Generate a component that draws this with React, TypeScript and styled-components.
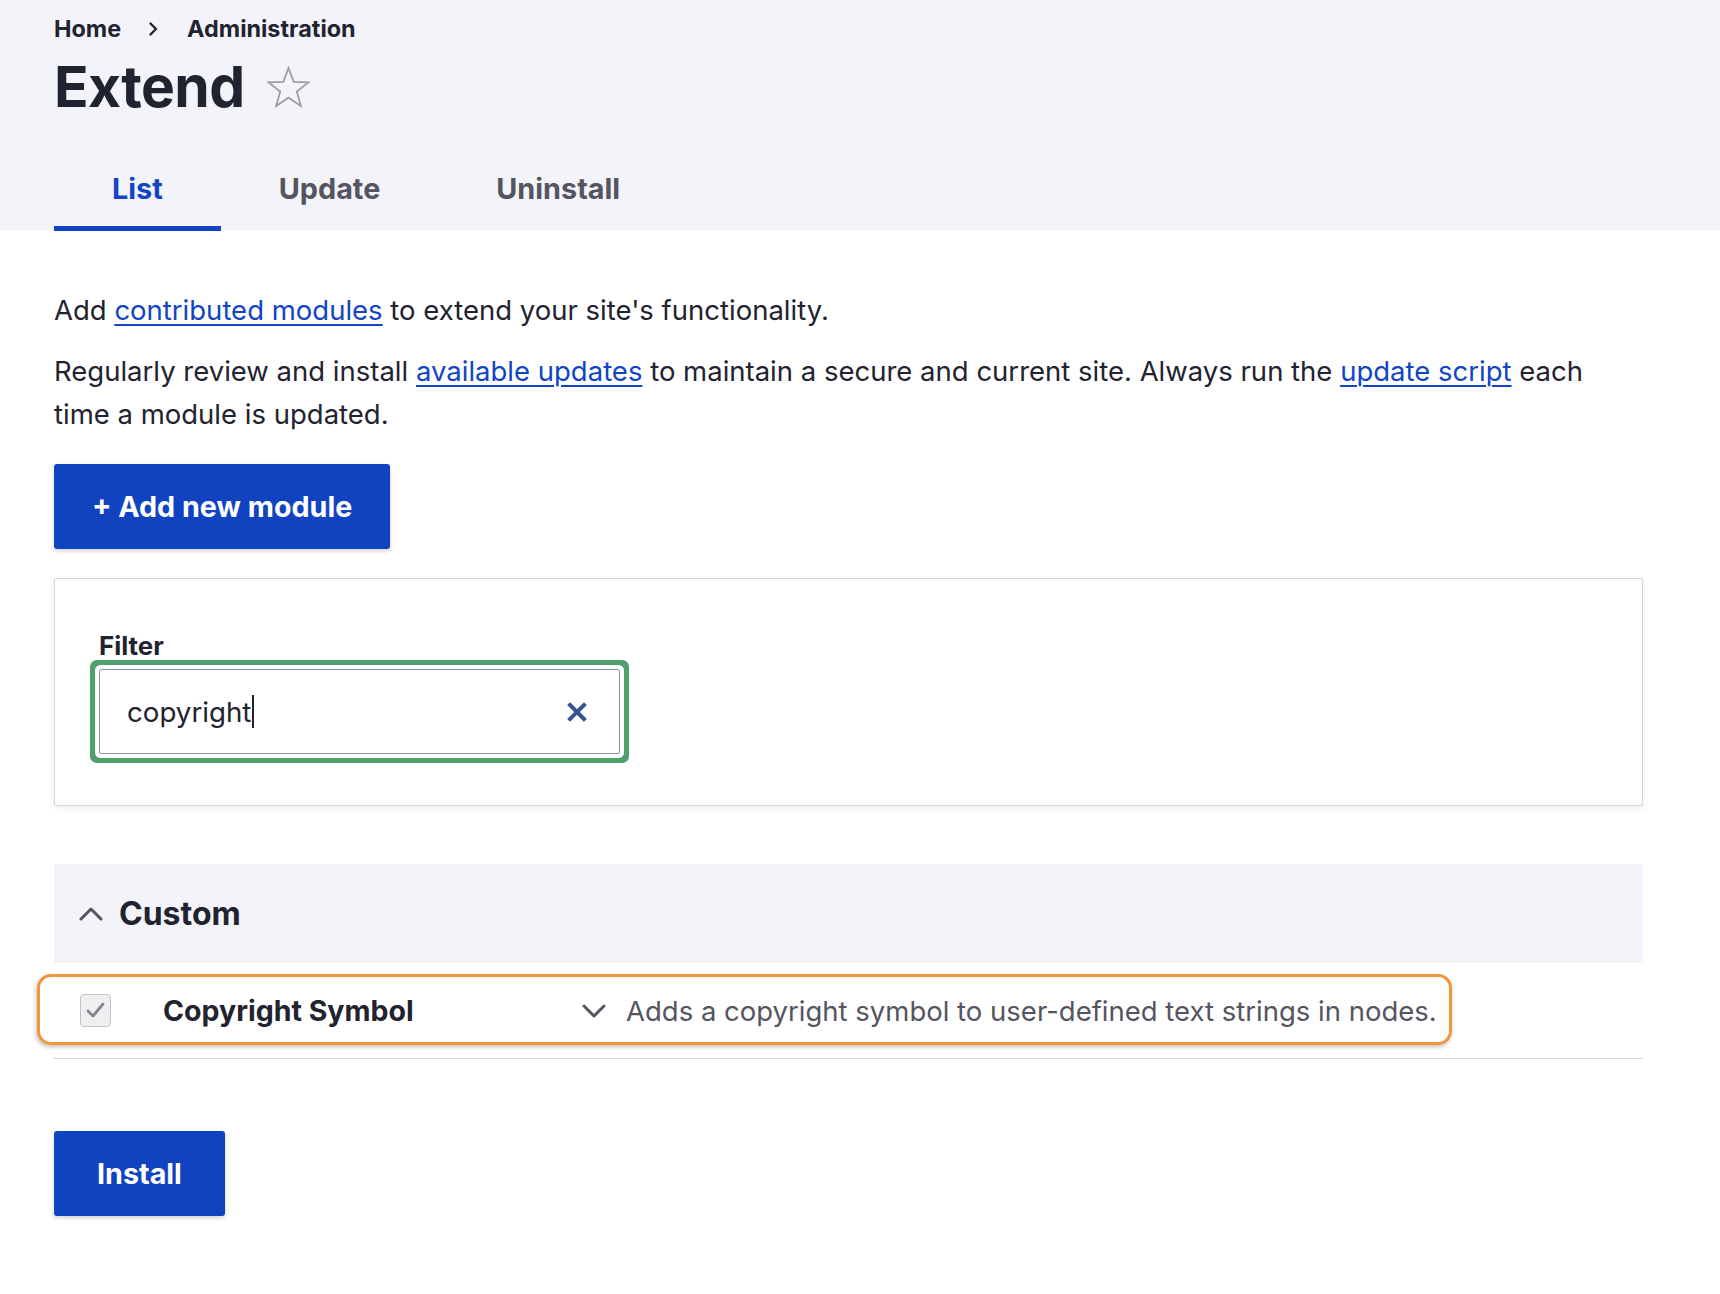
import React from "react";
import styled, { createGlobalStyle } from "styled-components";

const GlobalStyle = createGlobalStyle`
  html, body { margin: 0; padding: 0; background: #ffffff; }
  body { font-family: Inter, "Noto Sans", Arial, sans-serif; color: #222330; -webkit-font-smoothing: antialiased; }
  * { box-sizing: border-box; }
`;

const Page = styled.div`
  width: 1720px;
  min-height: 1294px;
  background: #fff;
`;

const Header = styled.header`
  background: #f3f4f9;
  padding: 15px 77px 0 54px;
  height: 230px;
`;

const Breadcrumb = styled.nav`
  display: flex;
  align-items: center;
  height: 27px;
  font-size: 23.4px;
  font-weight: 700;
  line-height: 27px;
  color: #222330;
`;

const Crumb = styled.span`
  color: #222330;
`;

const CrumbSep = styled.span`
  display: inline-flex;
  margin: 0 29px 0 28px;
  color: #222330;
`;

const TitleRow = styled.div`
  display: flex;
  align-items: center;
  gap: 22px;
  margin-top: 10px;
  height: 70px;
`;

const Title = styled.h1`
  margin: 0;
  font-size: 57px;
  line-height: 70px;
  font-weight: 700;
  letter-spacing: -0.6px;
  color: #222330;
`;

const Tabs = styled.nav`
  display: flex;
  margin-top: 30px;
`;

const Tab = styled.a<{ $active?: boolean }>`
  display: block;
  padding: 19px 58px;
  font-size: 28.8px;
  line-height: 36px;
  font-weight: 700;
  text-decoration: none;
  color: ${(p) => (p.$active ? "#1145c6" : "#545560")};
  border-bottom: 5px solid ${(p) => (p.$active ? "#1145c6" : "transparent")};
`;

const Main = styled.main`
  padding: 59px 77px 60px 54px;
`;

const Para = styled.p<{ $gap?: number }>`
  margin: ${(p) => p.$gap ?? 0}px 0 0;
  max-width: 1550px;
  font-size: 27.5px;
  line-height: 43px;
  color: #222330;
`;

const Link = styled.a`
  color: #1145c6;
  text-decoration: underline;
  text-underline-offset: 4px;
  text-decoration-thickness: 2px;
`;

const PrimaryButton = styled.button<{ $top: number; $padX: number }>`
  display: inline-flex;
  align-items: center;
  margin-top: ${(p) => p.$top}px;
  height: 85px;
  padding: 0 ${(p) => p.$padX}px;
  border: 0;
  border-radius: 3px;
  background: #1143c1;
  color: #fff;
  font-family: Inter, "Noto Sans", Arial, sans-serif;
  font-size: 28.7px;
  font-weight: 700;
  box-shadow: 0 2px 4px rgba(0, 0, 0, 0.18);
  cursor: pointer;
`;

const FilterCard = styled.div`
  margin-top: 29px;
  border: 1px solid #d6d7dc;
  border-radius: 2px;
  background: #fff;
  padding: 52px 44px 51px;
  box-shadow: 0 2px 6px rgba(0, 0, 0, 0.08);
`;

const FilterLabel = styled.label`
  display: block;
  font-size: 25.9px;
  line-height: 30px;
  font-weight: 700;
  color: #222330;
  margin-bottom: 8px;
`;

const FilterInput = styled.div`
  display: flex;
  align-items: center;
  width: 521px;
  height: 85px;
  padding: 0 32px 0 27px;
  border: 1px solid #8e929c;
  border-radius: 2px;
  background: #fff;
  box-shadow: 0 0 0 4px #fff, 0 0 0 9px #4ea16c;
`;

const InputValue = styled.span`
  font-size: 27.7px;
  line-height: 34px;
  color: #222330;
`;

const Caret = styled.span`
  display: inline-block;
  width: 2px;
  height: 33px;
  margin-left: 1px;
  background: #222330;
`;

const ClearButton = styled.span`
  margin-left: auto;
  display: inline-flex;
  width: 20px;
  height: 20px;
`;

const Section = styled.section`
  margin-top: 58px;
`;

const SectionHeader = styled.div`
  display: flex;
  align-items: center;
  gap: 16px;
  height: 99px;
  padding-left: 25px;
  background: #f3f4f9;
`;

const SectionTitle = styled.h2`
  margin: 0;
  font-size: 32px;
  line-height: 38px;
  font-weight: 700;
  color: #222330;
`;

const RowWrap = styled.div`
  position: relative;
`;

const ModuleRow = styled.div`
  display: grid;
  grid-template-columns: 109px 419px 1fr;
  align-items: center;
  height: 96px;
  border-bottom: 1px solid #d4d4da;
`;

const CheckCell = styled.div`
  padding-left: 26px;
  display: flex;
  align-items: center;
`;

const CheckBox = styled.span`
  display: inline-flex;
  align-items: center;
  justify-content: center;
  width: 31px;
  height: 33px;
  border: 1px solid #c3c3c9;
  border-radius: 4px;
  background: #efeff1;
`;

const ModuleName = styled.div`
  font-size: 28.5px;
  line-height: 34px;
  font-weight: 700;
  color: #222330;
`;

const DescCell = styled.div`
  display: flex;
  align-items: center;
  gap: 20px;
`;

const Description = styled.span`
  font-size: 27.5px;
  line-height: 34px;
  color: #545560;
`;

const Highlight = styled.div`
  position: absolute;
  left: -17px;
  top: 11px;
  width: 1415px;
  height: 71px;
  border: 3px solid #f0953a;
  border-radius: 14px;
  box-shadow: -1px 2px 4px rgba(0, 0, 0, 0.25);
  pointer-events: none;
`;

const Star = () => (
  <svg width="43" height="43" viewBox="0 0 44 44">
    <polygon
      points="22,2 27.3,16.2 42.4,16.8 30.5,26.2 34.6,40.8 22,32.4 9.4,40.8 13.5,26.2 1.6,16.8 16.7,16.2"
      fill="none"
      stroke="#9c9ca6"
      strokeWidth="1.8"
      strokeLinejoin="miter"
    />
  </svg>
);

const Chevron = ({ dir, color = "#545560", w = 24, h = 14, sw = 3 }: { dir: "up" | "down" | "right"; color?: string; w?: number; h?: number; sw?: number }) => {
  if (dir === "right") {
    return (
      <svg width={w} height={h} viewBox={`0 0 ${w} ${h}`}>
        <polyline points={`1.5,1.5 ${w - 2},${h / 2} 1.5,${h - 1.5}`} fill="none" stroke={color} strokeWidth={sw} strokeLinecap="round" strokeLinejoin="round" />
      </svg>
    );
  }
  const pts =
    dir === "up"
      ? `2,${h - 2} ${w / 2},2 ${w - 2},${h - 2}`
      : `2,2 ${w / 2},${h - 2} ${w - 2},2`;
  return (
    <svg width={w} height={h} viewBox={`0 0 ${w} ${h}`}>
      <polyline points={pts} fill="none" stroke={color} strokeWidth={sw} strokeLinecap="round" strokeLinejoin="round" />
    </svg>
  );
};

const ClearIcon = () => (
  <svg width="20" height="20" viewBox="0 0 20 20">
    <path d="M3 3 L17 17 M17 3 L3 17" stroke="#36548f" strokeWidth="4" strokeLinecap="square" />
  </svg>
);

const CheckMark = () => (
  <svg width="19" height="17" viewBox="0 0 19 17">
    <polyline points="2,9 7,14 17,2" fill="none" stroke="#85858d" strokeWidth="2.8" strokeLinecap="round" strokeLinejoin="round" />
  </svg>
);

export default function App() {
  return (
    <Page>
      <GlobalStyle />
      <Header>
        <Breadcrumb>
          <Crumb>Home</Crumb>
          <CrumbSep>
            <Chevron dir="right" color="#222330" w={9} h={14} sw={2.4} />
          </CrumbSep>
          <Crumb>Administration</Crumb>
        </Breadcrumb>
        <TitleRow>
          <Title>Extend</Title>
          <Star />
        </TitleRow>
        <Tabs>
          <Tab $active href="#">List</Tab>
          <Tab href="#">Update</Tab>
          <Tab href="#">Uninstall</Tab>
        </Tabs>
      </Header>
      <Main>
        <Para>
          Add <Link href="#">contributed modules</Link> to extend your site's functionality.
        </Para>
        <Para $gap={18}>
          Regularly review and install <Link href="#">available updates</Link> to maintain a secure and current site. Always run the{" "}
          <Link href="#">update script</Link> each time a module is updated.
        </Para>
        <PrimaryButton $top={28} $padX={38}>+ Add new module</PrimaryButton>
        <FilterCard>
          <FilterLabel>Filter</FilterLabel>
          <FilterInput>
            <InputValue>copyright</InputValue>
            <Caret />
            <ClearButton>
              <ClearIcon />
            </ClearButton>
          </FilterInput>
        </FilterCard>
        <Section>
          <SectionHeader>
            <Chevron dir="up" />
            <SectionTitle>Custom</SectionTitle>
          </SectionHeader>
          <RowWrap>
            <ModuleRow>
              <CheckCell>
                <CheckBox>
                  <CheckMark />
                </CheckBox>
              </CheckCell>
              <ModuleName>Copyright Symbol</ModuleName>
              <DescCell>
                <Chevron dir="down" />
                <Description>Adds a copyright symbol to user-defined text strings in nodes.</Description>
              </DescCell>
            </ModuleRow>
            <Highlight />
          </RowWrap>
        </Section>
        <PrimaryButton $top={72} $padX={43}>Install</PrimaryButton>
      </Main>
    </Page>
  );
}
